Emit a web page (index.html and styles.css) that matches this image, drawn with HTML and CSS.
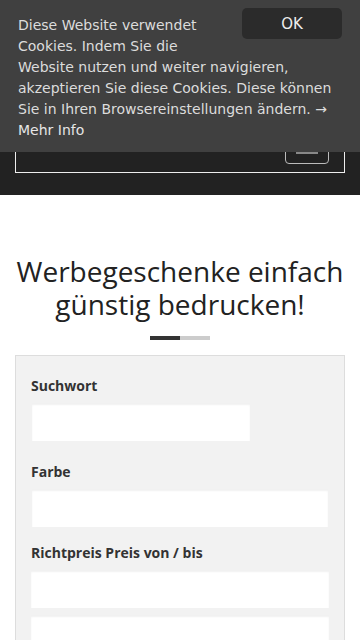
FILE: index.html
```html
<!DOCTYPE html>
<html lang="de">
<head>
    <meta charset="UTF-8">
    <meta name="viewport" content="width=device-width, initial-scale=1.0">
    <title>Werbegeschenke</title>
    <link rel="stylesheet" href="styles.css">
</head>
<body>

    <div class="cookie-bar">
        <button class="cookie-ok">OK</button>
        <p>Diese Website verwendet Cookies. Indem Sie die Website nutzen und weiter navigieren, akzeptieren Sie diese Cookies. Diese können Sie in Ihren Browsereinstellungen ändern. &rarr; <a href="#">Mehr Info</a></p>
    </div>

    <header class="site-header">
        <div class="logo-area"></div>
        <nav class="nav-box">
            <button class="nav-toggle">
                <span class="icon-bar"></span>
                <span class="icon-bar"></span>
                <span class="icon-bar"></span>
            </button>
        </nav>
    </header>

    <section class="intro">
        <h1>Werbegeschenke einfach günstig bedrucken!</h1>
        <div class="divider"><span class="dark"></span><span class="light"></span></div>
    </section>

    <form class="search-panel">
        <label for="suchwort">Suchwort</label>
        <input type="text" id="suchwort" class="short">

        <label for="farbe">Farbe</label>
        <input type="text" id="farbe">

        <label class="price-label" for="preisVon">Richtpreis Preis von / bis</label>
        <input type="text" id="preisVon" class="wide">
        <input type="text" id="preisBis" class="wide">
    </form>

</body>
</html>
```

FILE: styles.css
```css
body {
    margin: 0;
    font-family: "Open Sans", Arial, sans-serif;
    background-color: white;
    color: #333;
}

.cookie-bar {
    position: fixed;
    top: 0;
    left: 0;
    right: 0;
    z-index: 999;
    background-color: #404040;
    padding: 15px 18px 11px;
    height: 126px;
}
.cookie-bar p {
    margin: 0;
    font-family: "DejaVu Sans", Verdana, sans-serif;
    font-size: 14px;
    line-height: 21px;
    color: #dcdcdc;
}
.cookie-bar a {
    color: #e6e6e6;
    text-decoration: none;
}
.cookie-ok {
    float: right;
    width: 100px;
    height: 31px;
    margin: -7px 0 0 12px;
    background-color: #2b2b2b;
    color: #eee;
    border: none;
    border-radius: 5px;
    font-family: "DejaVu Sans", Verdana, sans-serif;
    font-size: 15px;
    cursor: pointer;
}

.site-header {
    background-color: #222;
    padding: 0 15px 22px;
}
.logo-area {
    height: 121px;
}
.nav-box {
    border: 1px solid #eee;
    display: flex;
    justify-content: flex-end;
    padding: 8px 15px 8px;
}
.nav-toggle {
    display: flex;
    flex-direction: column;
    gap: 4px;
    width: 44px;
    padding: 9px 10px;
    background: transparent;
    border: 1px solid #bbb;
    border-radius: 4px;
}
.icon-bar {
    display: block;
    width: 22px;
    height: 2px;
    background-color: #888;
}

.intro {
    padding: 60px 15px 15px;
    text-align: center;
}
.intro h1 {
    margin: 0 0 15px;
    font-size: 28px;
    font-weight: 400;
    line-height: 33px;
    color: #222;
}
.divider {
    display: flex;
    justify-content: center;
}
.divider span {
    width: 30px;
    height: 4px;
}
.divider .dark {
    background-color: #333;
}
.divider .light {
    background-color: #ccc;
}

.search-panel {
    margin: 0 15px;
    background-color: #f2f2f2;
    border: 1px solid #ddd;
    padding: 20px 15px 30px;
    display: flex;
    flex-direction: column;
}
.search-panel label {
    font-size: 14px;
    font-weight: 700;
    line-height: 20px;
    margin-bottom: 7px;
    color: #333;
}
.search-panel input {
    box-sizing: border-box;
    height: 38px;
    margin: 0 1px 21px;
    border: none;
    background-color: white;
    box-shadow: inset 0 2px 2px rgba(0, 0, 0, 0.06);
    font-size: 14px;
}
.search-panel input.short {
    width: 218px;
}
.search-panel input.wide {
    margin: 0 0 7px;
}
.search-panel .price-label {
    margin-top: -5px;
}
```
